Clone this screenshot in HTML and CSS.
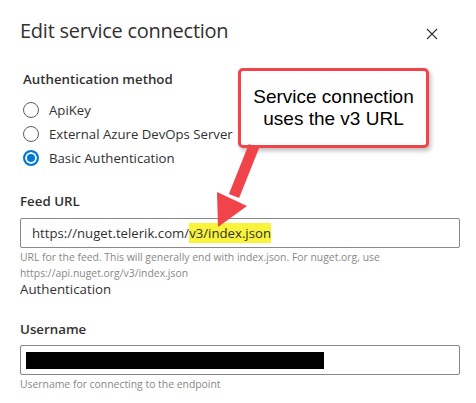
FILE: index.html
```html
<!DOCTYPE html>
<html lang="en">
<head>
<meta charset="utf-8">
<title>Edit service connection</title>
<link rel="stylesheet" href="styles.css">
</head>
<body>
<div class="dialog">
  <header class="head">
    <h1 class="title">Edit service connection</h1>
    <button class="close" aria-label="Close">
      <svg width="12" height="12" viewBox="0 0 12 12"><path d="M1 1 L11 11 M11 1 L1 11" stroke="#323130" stroke-width="1.1" fill="none"/></svg>
    </button>
  </header>

  <section class="group">
    <div class="label">Authentication method</div>
    <ul class="radios">
      <li class="radio"><span class="dot"></span>ApiKey</li>
      <li class="radio"><span class="dot"></span>External Azure DevOps Server</li>
      <li class="radio is-on"><span class="dot"></span>Basic Authentication</li>
    </ul>
  </section>

  <section class="field feed">
    <div class="label">Feed URL</div>
    <div class="input">https://nuget.telerik.com/<mark class="hl">v3/index.json</mark></div>
    <p class="hint">URL for the feed. This will generally end with index.json. For nuget.org, use<br>https://api.nuget.org/v3/index.json</p>
  </section>

  <div class="subhead">Authentication</div>

  <section class="field user">
    <div class="label">Username</div>
    <div class="input"><span class="redacted"></span></div>
    <p class="hint">Username for connecting to the endpoint</p>
  </section>

  <div class="callout">Service connection<br>uses the v3 URL</div>
  <svg class="arrow" width="476" height="403" viewBox="0 0 476 403">
    <line x1="254" y1="146" x2="234" y2="196" stroke="#f0434a" stroke-width="11"/>
    <polygon points="218,227 217,192 247,206" fill="#f0434a"/>
  </svg>
</div>
</body>
</html>
```

FILE: styles.css
```css
* { box-sizing: border-box; }

html, body {
  margin: 0;
  background: #ffffff;
}

body {
  font-family: "Open Sans", "Noto Sans", sans-serif;
  color: #323130;
  width: 476px;
  height: 403px;
  overflow: hidden;
}

.dialog {
  position: relative;
  width: 476px;
  height: 403px;
  padding: 17px 16px 0 20px;
}

.head {
  display: flex;
  align-items: center;
  justify-content: space-between;
}

.title {
  margin: 0;
  font-size: 20px;
  line-height: 28px;
  font-weight: 500;
  letter-spacing: -0.25px;
}

.close {
  border: 0;
  background: none;
  padding: 0;
  width: 12px;
  height: 12px;
  margin: 6px 22px 0 0;
  display: flex;
}

.label {
  font-size: 13.3px;
  line-height: 20px;
  font-weight: 600;
}

.group {
  margin-top: 24px;
}

.group .label {
  padding-left: 3px;
}

.radios {
  list-style: none;
  margin: 9px 0 0;
  padding: 0 0 0 3px;
}

.radio {
  display: flex;
  align-items: center;
  gap: 10px;
  height: 24px;
  font-size: 13.2px;
}

.dot {
  width: 16px;
  height: 16px;
  border-radius: 50%;
  border: 1px solid #605e5c;
  flex: none;
}

.is-on .dot {
  border: 2px solid #0078d4;
  background: #0078d4;
  box-shadow: inset 0 0 0 2px #ffffff;
}

.feed {
  margin-top: 21px;
}

.input {
  margin-top: 7px;
  height: 30px;
  width: 440px;
  border: 1px solid #8a8886;
  border-radius: 2px;
  display: flex;
  align-items: center;
  padding-left: 11px;
  font-size: 13.2px;
}

.hl {
  background: #f9f33c;
  color: inherit;
  padding: 1px 0;
}

.hint {
  margin: 1px 0 0;
  font-size: 10.4px;
  line-height: 16px;
  color: #8a8886;
}

.subhead {
  font-size: 13.3px;
  line-height: 16px;
}

.user {
  margin-top: 22px;
}

.user .input {
  margin-top: 6px;
  padding-left: 5px;
}

.redacted {
  display: block;
  width: 298px;
  height: 17px;
  background: #000000;
}

.callout {
  position: absolute;
  left: 238px;
  top: 68px;
  width: 191px;
  height: 80px;
  border: 3px solid #f0434a;
  border-radius: 5px;
  background: #ffffff;
  box-shadow: 2px 3px 4px rgba(0, 0, 0, 0.25);
  display: flex;
  align-items: center;
  justify-content: center;
  text-align: center;
  font-family: "Liberation Sans", Arial, sans-serif;
  font-size: 19px;
  line-height: 22px;
  color: #000000;
}

.arrow {
  position: absolute;
  left: 0;
  top: 0;
  pointer-events: none;
}
```
